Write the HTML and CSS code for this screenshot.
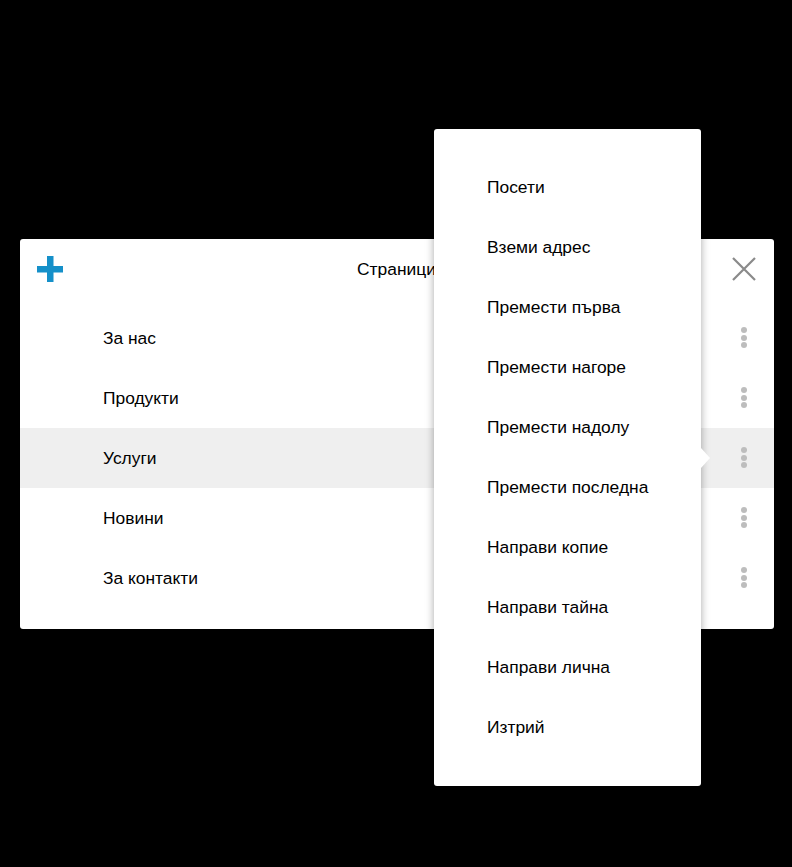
FILE: index.html
```html
<!DOCTYPE html>
<html lang="bg">
<head>
<meta charset="utf-8">
<link rel="stylesheet" href="styles.css">
</head>
<body>
<div class="panel">
  <div class="header">
    <div class="add">
      <svg width="26" height="26" viewBox="0 0 26 26"><rect x="10" y="0" width="6.5" height="26" fill="#1590c9"/><rect x="0" y="10" width="26" height="6.5" fill="#1590c9"/></svg>
    </div>
    <div class="title">Страници</div>
    <div class="close">
      <svg width="24" height="24" viewBox="0 0 24 24"><path d="M1 1L23 23M23 1L1 23" stroke="#8a8a8a" stroke-width="2.2" fill="none"/></svg>
    </div>
  </div>
  <ul class="list">
    <li class="row"><span class="label">За нас</span><span class="dots"><i></i><i></i><i></i></span></li>
    <li class="row"><span class="label">Продукти</span><span class="dots"><i></i><i></i><i></i></span></li>
    <li class="row active"><span class="label">Услуги</span><span class="dots"><i></i><i></i><i></i></span></li>
    <li class="row"><span class="label">Новини</span><span class="dots"><i></i><i></i><i></i></span></li>
    <li class="row"><span class="label">За контакти</span><span class="dots"><i></i><i></i><i></i></span></li>
  </ul>
</div>
<ul class="menu">
  <li>Посети</li>
  <li>Вземи адрес</li>
  <li>Премести първа</li>
  <li>Премести нагоре</li>
  <li>Премести надолу</li>
  <li>Премести последна</li>
  <li>Направи копие</li>
  <li>Направи тайна</li>
  <li>Направи лична</li>
  <li>Изтрий</li>
</ul>
</body>
</html>
```
FILE: styles.css
```css
html, body {
  margin: 0;
  padding: 0;
  background: #000;
  font-family: "Liberation Sans", Arial, sans-serif;
  font-size: 17.4px;
  color: #000;
}
.panel {
  margin: 239px 0 0 20px;
  width: 754px;
  background: #fff;
  border-radius: 3px;
}
.header {
  height: 59px;
  display: grid;
  grid-template-columns: 1fr auto 1fr;
  align-items: center;
  padding: 0 18px 0 17px;
}
.add, .close {
  display: flex;
}
.add svg, .close svg {
  display: block;
}
.close {
  justify-content: flex-end;
}
.title {
  line-height: 20px;
}
.list {
  list-style: none;
  margin: 0;
  padding: 10px 0 21px;
}
.row {
  height: 60px;
  display: flex;
  align-items: center;
  justify-content: space-between;
  padding: 0 27px 0 83px;
}
.row.active {
  background: #efefef;
}
.dots {
  display: flex;
  flex-direction: column;
  gap: 1.7px;
  margin-top: -1px;
}
.dots i {
  display: block;
  width: 6px;
  height: 6px;
  border-radius: 50%;
  background: #bdbdbd;
}
.menu {
  position: absolute;
  left: 434px;
  top: 129px;
  width: 267px;
  margin: 0;
  padding: 28px 0 29px;
  list-style: none;
  background: #fff;
  border-radius: 3px;
  box-shadow: 0 0 8px rgba(0, 0, 0, 0.35);
}
.menu::after {
  content: "";
  position: absolute;
  left: 267px;
  top: 319px;
  border-left: 9px solid #fff;
  border-top: 10px solid transparent;
  border-bottom: 10px solid transparent;
}
.menu li {
  box-sizing: border-box;
  height: 60px;
  line-height: 59px;
  padding: 1px 0 0 53px;
}
```
